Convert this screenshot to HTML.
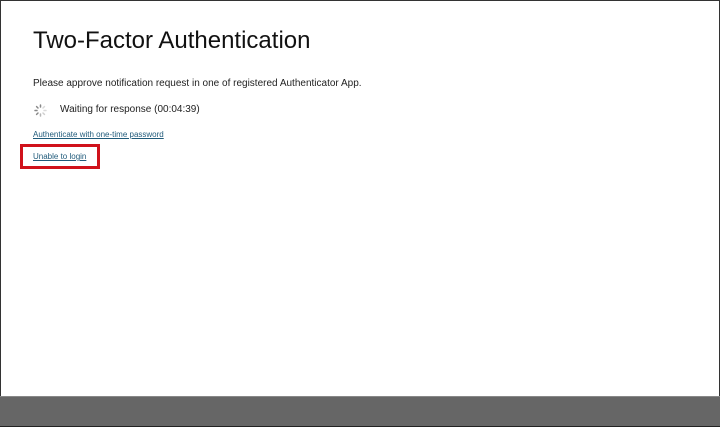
<!DOCTYPE html>
<html><head><style>
*{margin:0;padding:0;box-sizing:border-box}
body{width:720px;height:427px;position:relative;overflow:hidden;background:#fff;font-family:"Liberation Sans",Arial,sans-serif;color:#222}
.frame{position:absolute;inset:0;border:1px solid #333;border-bottom:1px solid #222}
h1{position:absolute;left:33px;top:27px;font-size:24px;font-weight:normal;color:#111}
.p{position:absolute;left:33px;top:78px;font-size:10px}
.w{position:absolute;left:60px;top:104px;font-size:10px}
.sp{position:absolute;left:34px;top:104px}
a{color:#1f5a7a;font-size:8px;text-decoration:underline}
.a1{position:absolute;left:33px;top:130px}
.a2{position:absolute;left:33px;top:152px}
.box{position:absolute;left:20px;top:144px;width:80px;height:25px;border:3px solid #d0121b}
.bar{position:absolute;left:0;top:396px;width:720px;height:31px;background:#666;border-top:1px solid #888;border-bottom:1px solid #222}
</style></head><body>
<div class="frame"></div>
<h1>Two-Factor Authentication</h1>
<div class="p">Please approve notification request in one of registered Authenticator App.</div>
<svg class="sp" width="13" height="13" viewBox="0 0 13 13"><g stroke="#888" stroke-width="1.5" stroke-linecap="round">
<line x1="6.5" y1="1" x2="6.5" y2="3"/><line x1="10.4" y1="2.6" x2="9" y2="4" opacity=".3"/><line x1="12" y1="6.5" x2="10" y2="6.5" opacity=".3"/><line x1="10.4" y1="10.4" x2="9" y2="9" opacity=".4"/><line x1="6.5" y1="12" x2="6.5" y2="10" opacity=".6"/><line x1="2.6" y1="10.4" x2="4" y2="9"/><line x1="1" y1="6.5" x2="3" y2="6.5"/><line x1="2.6" y1="2.6" x2="4" y2="4"/></g></svg>
<div class="w">Waiting for response (00:04:39)</div>
<a class="a1">Authenticate with one-time password</a>
<a class="a2">Unable to login</a>
<div class="box"></div>
<div class="bar"></div>
</body></html>
